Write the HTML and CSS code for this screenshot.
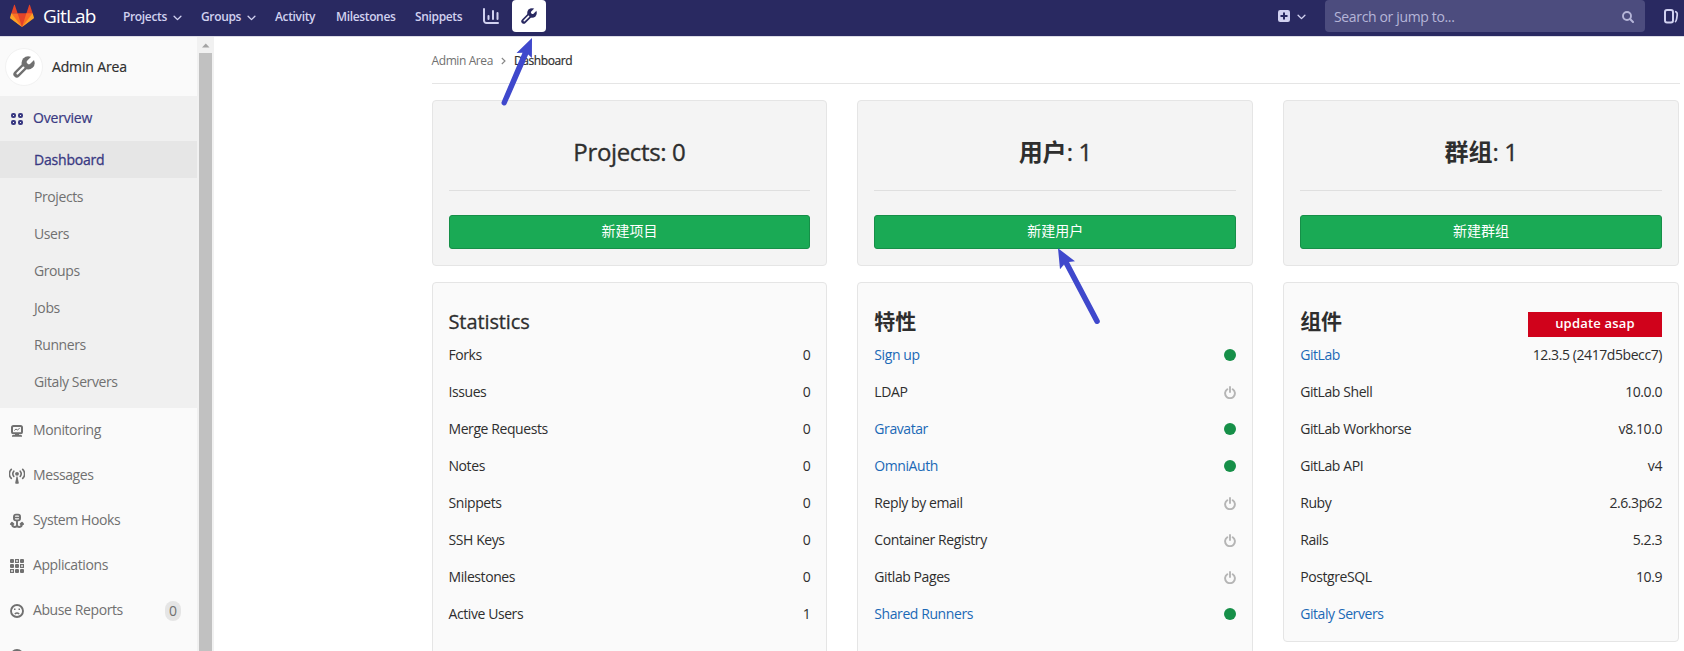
FILE: index.html
```html
<!DOCTYPE html>
<html lang="en">
<head>
<meta charset="utf-8">
<title>Dashboard · Admin Area · GitLab</title>
<link rel="stylesheet" href="styles.css">
</head>
<body>
<svg class="defs" width="0" height="0">
  <symbol id="wrench" viewBox="0 0 16 16">
    <mask id="wrench-mask" maskUnits="userSpaceOnUse" x="0" y="0" width="16" height="16">
      <rect width="16" height="16" fill="#fff"/>
      <path d="M11.6 4.4 16 0" stroke="#000" stroke-width="3.2" stroke-linecap="round"/>
      <path d="M3.2 12.8 7.6 8.4" stroke="#000" stroke-width="1.5" stroke-linecap="round"/>
    </mask>
    <g mask="url(#wrench-mask)">
      <circle cx="11" cy="5" r="4.8" fill="currentColor"/>
      <path d="M2.8 13.2 9.5 6.5" stroke="currentColor" stroke-width="5" stroke-linecap="round"/>
    </g>
  </symbol>
  <symbol id="chevron" viewBox="0 0 10 6"><path d="M1.2 1 5 4.8 8.8 1" fill="none" stroke="currentColor" stroke-width="1.5" stroke-linecap="round" stroke-linejoin="round"/></symbol>
  <symbol id="power" viewBox="0 0 12 13"><path d="M3.300 3.200a4.900 4.900 0 1 0 5.400 0M6 1v5" fill="none" stroke="currentColor" stroke-width="1.900" stroke-linecap="round"/></symbol>
</svg>

<header class="navbar">
  <svg class="logo" viewBox="0 0 36 36">
    <path fill="#e24329" d="M2 14l9.38 9v-9l-4-12.28c-.205-.632-1.176-.632-1.38 0zM34 14l-9.38 9v-9l4-12.28c.205-.632 1.176-.632 1.38 0zM18 34.38 3 14h30z"/>
    <path fill="#fc6d26" d="M18 34.38 11.38 14H2l4 11zM18 34.38 24.62 14H34l-4 11z"/>
    <path fill="#fca326" d="M2 14L.1 20.16c-.18.565 0 1.2.5 1.56L18 34.38zM34 14l1.9 6.16c.18.565 0 1.2-.5 1.56L18 34.38z"/>
  </svg>
  <span class="brand">GitLab</span>
  <nav class="menu">
    <a class="menu-projects">Projects<svg class="chev"><use href="#chevron"/></svg></a>
    <a class="menu-groups">Groups<svg class="chev"><use href="#chevron"/></svg></a>
    <a class="menu-activity">Activity</a>
    <a class="menu-milestones">Milestones</a>
    <a class="menu-snippets">Snippets</a>
  </nav>
  <svg class="chart" viewBox="0 0 16 16"><path d="M1 1v11.5A2.5 2.5 0 0 0 3.500 15H15" fill="none" stroke="currentColor" stroke-width="2" stroke-linecap="round"/><path d="M5.500 8v3M10 3v8M14.500 5v6" stroke="currentColor" stroke-width="2" stroke-linecap="round"/></svg>
  <a class="admin-link"><svg><use href="#wrench"/></svg></a>
  <div class="nav-right">
    <svg class="plus" viewBox="0 0 12 12"><rect width="12" height="12" rx="2.200" fill="#d1d1f0"/><path d="M6 2.500v7M2.500 6h7" stroke="#292961" stroke-width="2"/></svg>
    <svg class="chev"><use href="#chevron"/></svg>
    <div class="search"><span>Search or jump to...</span><svg viewBox="0 0 12 12"><path d="M8.300 8.300 11 11" stroke="currentColor" stroke-width="2" stroke-linecap="round"/><circle cx="5" cy="5" r="4" fill="none" stroke="currentColor" stroke-width="1.900"/></svg></div>
    <svg class="issues" viewBox="0 0 15 15"><rect x="1" y="1" width="8" height="12.500" rx="2" fill="none" stroke="currentColor" stroke-width="2"/><path d="M11 2.500c2.300.5 2.500 1.500 2.200 3.500l-.6 4c-.2 1.600-.7 2.500-1.600 3" fill="none" stroke="currentColor" stroke-width="1.700"/></svg>
  </div>
</header>

<div class="page">
  <aside class="sidebar">
    <div class="context"><span class="avatar"><svg><use href="#wrench"/></svg></span><b>Admin Area</b></div>
    <div class="group">
      <div class="item current"><svg viewBox="0 0 16 16"><g fill="none" stroke="currentColor" stroke-width="2"><rect x="3" y="3" width="3" height="3" rx="1"/><rect x="10" y="3" width="3" height="3" rx="1"/><rect x="3" y="10" width="3" height="3" rx="1"/><rect x="10" y="10" width="3" height="3" rx="1"/></g></svg><span>Overview</span></div>
      <ul>
        <li class="active">Dashboard</li><li>Projects</li><li>Users</li><li>Groups</li><li>Jobs</li><li>Runners</li><li>Gitaly Servers</li>
      </ul>
    </div>
    <div class="item"><svg viewBox="0 0 16 16"><rect x="3" y="3" width="10" height="7.200" rx="1.500" fill="none" stroke="currentColor" stroke-width="2"/><path d="M5.300 7.500 7 6l1.300 1 2.400-1.700" fill="none" stroke="currentColor"/><path d="M6 11h4v1h2a1 1 0 0 1 1 1v.7H3V13a1 1 0 0 1 1-1h2z" fill="currentColor"/></svg><span>Monitoring</span></div>
    <div class="item"><svg viewBox="0 0 16 16"><g fill="none" stroke="currentColor" stroke-width="1.600" stroke-linecap="round"><path d="M2.300 1.400a6.200 6.200 0 0 0 0 9M13.700 1.400a6.200 6.200 0 0 1 0 9M4.800 3.200a4.200 4.200 0 0 0 0 5.200M11.200 3.200a4.200 4.200 0 0 1 0 5.200"/></g><circle cx="8" cy="5.800" r="1.900" fill="currentColor"/><path d="M7.500 8.500h1L9.800 15q0 .8-.8.800H7q-.8 0-.8-.8z" fill="currentColor"/></svg><span>Messages</span></div>
    <div class="item"><svg viewBox="0 0 16 16"><g fill="none" stroke="currentColor" stroke-width="1.900" stroke-linecap="round" stroke-linejoin="round"><rect x="5" y="1.600" width="6" height="5.800" rx="1.800"/><path d="M5 4.600h6" stroke-width="1.500"/><path d="M8 8v5.500M2.900 10.300c0 2.400.8 3.700 2.600 3.700C7 14 8 13.300 8 12c0 1.300 1 2 2.500 2 1.800 0 2.600-1.300 2.600-3.700M1.900 11l1-1.200 1.500 1.200M14.100 11l-1-1.200-1.500 1.200"/></g></svg><span>System Hooks</span></div>
    <div class="item"><svg viewBox="0 0 16 16"><g fill="currentColor"><rect x="1" y="1" width="4" height="4" rx="1"/><rect x="1" y="6" width="4" height="4" rx="1"/><rect x="6" y="6" width="4" height="4" rx="1"/><rect x="11" y="1" width="4" height="4" rx="1"/><rect x="6" y="11" width="4" height="4" rx="1"/><rect x="11" y="11" width="4" height="4" rx="1"/></g><g fill="none" stroke="currentColor" stroke-width="1.200"><rect x="6.600" y="1.600" width="2.800" height="2.800"/><rect x="11.600" y="6.600" width="2.800" height="2.800"/><rect x="1.600" y="11.600" width="2.800" height="2.800"/></g></svg><span>Applications</span></div>
    <div class="item"><svg viewBox="0 0 16 16"><circle cx="8" cy="8" r="6" fill="none" stroke="currentColor" stroke-width="1.900"/><path d="M5 6.200h1.500M9.500 6.200H11" stroke="currentColor" stroke-width="1.500"/><path d="M5.800 11q2.200-2 4.400 0" fill="none" stroke="currentColor" stroke-width="1.500"/></svg><span>Abuse Reports</span><em class="badge">0</em></div>
    <div class="item"><svg viewBox="0 0 16 16"><circle cx="8" cy="8" r="6" fill="none" stroke="currentColor" stroke-width="2"/></svg></div>
  </aside>
  <div class="scrollbar"><svg viewBox="0 0 17 17"><path d="M5 10.500h7.500L8.750 6.500z" fill="#a3a3a3"/></svg><div class="thumb"></div></div>

  <main class="content">
    <div class="crumbs"><span>Admin Area</span><svg viewBox="0 0 5 8"><path d="M.8 1 4 4 .8 7" fill="none" stroke="#868686" stroke-width="1.100"/></svg><b>Dashboard</b></div>
    <div class="cards">
      <section class="count"><h2>Projects: 0</h2><button>新建项目</button></section>
      <section class="count"><h2><strong>用户</strong>: 1</h2><button>新建用户</button></section>
      <section class="count"><h2><strong>群组</strong>: 1</h2><button>新建群组</button></section>

      <section class="info tall">
        <h3>Statistics</h3>
        <p>Forks<span>0</span></p><p>Issues<span>0</span></p><p>Merge Requests<span>0</span></p><p>Notes<span>0</span></p><p>Snippets<span>0</span></p><p>SSH Keys<span>0</span></p><p>Milestones<span>0</span></p><p>Active Users<span>1</span></p>
      </section>
      <section class="info tall">
        <h3 class="cjk">特性</h3>
        <p><a>Sign up</a><i class="on"></i></p>
        <p>LDAP<svg class="off"><use href="#power"/></svg></p>
        <p><a>Gravatar</a><i class="on"></i></p>
        <p><a>OmniAuth</a><i class="on"></i></p>
        <p>Reply by email<svg class="off"><use href="#power"/></svg></p>
        <p>Container Registry<svg class="off"><use href="#power"/></svg></p>
        <p>Gitlab Pages<svg class="off"><use href="#power"/></svg></p>
        <p><a>Shared Runners</a><i class="on"></i></p>
      </section>
      <section class="info">
        <h3 class="cjk">组件<strong class="update">update asap</strong></h3>
        <p><a>GitLab</a><span>12.3.5 (2417d5becc7)</span></p><p>GitLab Shell<span>10.0.0</span></p><p>GitLab Workhorse<span>v8.10.0</span></p><p>GitLab API<span>v4</span></p><p>Ruby<span>2.6.3p62</span></p><p>Rails<span>5.2.3</span></p><p>PostgreSQL<span>10.9</span></p><p><a>Gitaly Servers</a></p>
      </section>
    </div>
  </main>
</div>

<svg class="arrows" viewBox="0 0 1684 651">
  <g fill="#3f48cc"><path d="M532 38 516.500 53l6-.3L501.600 102a2.700 2.700 0 0 0 4.800 2.300L528.200 54.500l3.700 3.500z"/>
  <path d="M1058 248.300 1075 261.200l-6 .8L1099.500 320a2.700 2.700 0 0 1-4.900 2.500L1064 264.500l-4 4.800z"/></g>
</svg>
</body>
</html>
```
FILE: styles.css
```css
* { box-sizing: border-box; }
body {
  margin: 0;
  height: 651px;
  overflow: hidden;
  background: #fff;
  color: #2e2e2e;
  font: 14px/20px "Open Sans", "Noto Sans CJK SC", sans-serif;
  letter-spacing: -0.4px;
}
svg { display: block; flex: none; }
b { font-weight: 500; -webkit-text-stroke: 0.2px currentColor; }
.defs { position: absolute; }

.navbar {
  display: flex;
  height: 37px;
  padding-left: 10px;
  background: #292961;
  border-bottom: 1px solid #dcdce6;
  color: #d1d1f0;
}
.logo { width: 24px; height: 24px; margin-top: 4px; }
.brand { width: 89px; padding-left: 9px; font-size: 19px; line-height: 32px; color: #fff; letter-spacing: -0.8px; }
.menu { display: flex; font-size: 12px; font-weight: 600; line-height: 32px; letter-spacing: -0.35px; }
.menu a { display: flex; align-items: center; height: 33px; gap: 6px; }
.menu-projects { width: 78px; }
.menu-groups { width: 74px; }
.menu-activity { width: 61px; }
.menu-milestones { width: 79px; }
.menu-snippets { width: 68px; }
.chev { width: 9px; height: 6px; margin-top: 2px; }
.chart { width: 16px; height: 16px; margin: 8px 13px 0 0; }
.admin-link { display: grid; place-items: center; width: 34px; height: 32px; border-radius: 4px; background: #fff; color: #292961; }
.admin-link svg { width: 16px; height: 16px; }
.nav-right { display: flex; align-items: center; height: 32px; margin-left: auto; padding-right: 5px; }
.plus { width: 12px; height: 12px; margin-right: 7px; }
.search {
  display: flex;
  align-items: center;
  justify-content: space-between;
  width: 320px;
  height: 32px;
  margin: 0 19px;
  padding: 1px 11px 0 9px;
  border-radius: 4px;
  background: #4c4c7e;
  color: #b5b5d8;
}
.search span { letter-spacing: -0.35px; }
.search svg { width: 12px; height: 12px; }
.issues { width: 15px; height: 15px; }

.page { display: flex; height: 614px; }
.sidebar { width: 197px; height: 614px; overflow: hidden; background: #fafafa; color: #707070; }
.context { display: flex; align-items: center; gap: 9px; height: 59px; padding-left: 5px; color: #2e2e2e; letter-spacing: -0.15px; }
.avatar { display: grid; place-items: center; width: 38px; height: 38px; border-radius: 50%; background: #fff; border: 1px solid #f2f2f2; color: #707070; }
.avatar svg { width: 22px; height: 22px; }
.group { height: 312px; background: #f0f0f0; }
.item { display: flex; align-items: center; gap: 8px; height: 45px; padding: 0 16px 0 9px; }
.item svg { width: 16px; height: 16px; }
.item span { margin-top: -1px; }
.current { color: #393982; letter-spacing: -0.2px; -webkit-text-stroke: 0.2px currentColor; }
.badge { margin-left: auto; padding: 0 4px; border-radius: 10px; background: #e5e5e5; font-style: normal; letter-spacing: -0.8px; width: 16px; }
ul { margin: 0; padding: 0; list-style: none; }
li { height: 37px; padding-left: 34px; line-height: 37px; }
.active { background: #e6e6e6; color: #393982; letter-spacing: -0.2px; -webkit-text-stroke: 0.3px currentColor; }
.scrollbar { width: 17px; background: #f1f1f1; }
.thumb { width: 13px; height: 600px; margin-left: 2px; margin-top: -1px; background: #c1c1c1; }

.content { width: 1466px; padding-left: 217.5px; }
.crumbs { display: flex; align-items: center; width: 1248.5px; height: 47px; padding-top: 1px; border-bottom: 1px solid #e5e5e5; font-size: 12px; color: #707070; letter-spacing: -0.4px; }
.crumbs svg { width: 5px; height: 8px; margin: 0 8px 0 8px; }
.crumbs b { color: #2e2e2e; }
.cards { display: grid; grid-template-columns: repeat(3, 1fr); gap: 16px 30px; align-items: start; width: 1247.5px; margin-top: 16px; }
section { border: 1px solid #e5e5e5; border-radius: 4px; padding: 0 16px; }
.count { height: 166px; background: #f4f4f4; text-align: center; }
h2 { margin: 0 0 24px; height: 90px; padding-top: 36px; border-bottom: 1px solid #dfdfdf; font-size: 24px; line-height: 30px; font-weight: 500; letter-spacing: -0.35px; -webkit-text-stroke: 0.35px currentColor; }
h2 strong { font-weight: 700; -webkit-text-stroke: 0; letter-spacing: 0; }
button { display: block; width: 100%; height: 34px; border: 1px solid #168f48; border-radius: 3px; background: #1aaa55; color: #fff; font: inherit; letter-spacing: 0; padding: 0 0 2px; }
.info { height: 360px; padding-top: 23px; background: #fafafa; }
.tall { height: 400px; }
h3 { display: flex; justify-content: space-between; margin: 0; height: 31px; font-size: 20px; line-height: 31px; font-weight: 500; letter-spacing: -0.1px; -webkit-text-stroke: 0.3px currentColor; }
.cjk { font-size: 21px; font-weight: 700; -webkit-text-stroke: 0; }
.update { width: 134px; height: 25px; margin-top: 6px; background: #d0021b; color: #fff; text-align: center; font: 600 13px/22px "Open Sans", sans-serif; letter-spacing: 0.2px; }
p { display: flex; justify-content: space-between; align-items: center; height: 37px; margin: 0; padding-bottom: 1px; letter-spacing: -0.42px; }
p a { color: #1b69b6; }
.on { width: 12px; height: 12px; border-radius: 50%; background: #168f48; }
.off { width: 12px; height: 13px; color: #b5b5b5; }
.arrows { position: absolute; left: 0; top: 0; width: 1684px; height: 651px; pointer-events: none; }
```
